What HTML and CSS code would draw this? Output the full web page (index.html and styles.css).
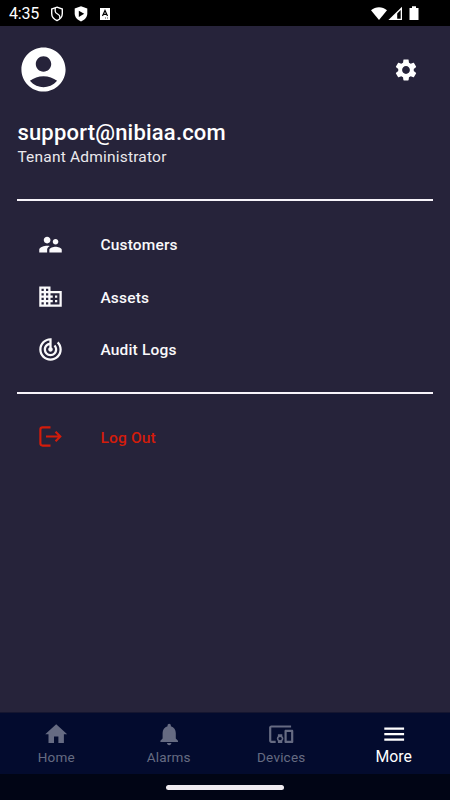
FILE: index.html
```html
<!DOCTYPE html>
<html lang="en">
<head>
<meta charset="utf-8">
<meta name="viewport" content="width=device-width">
<title>More</title>
<link rel="stylesheet" href="styles.css">
</head>
<body>
<div class="screen">
  <header class="status">
    <span class="time">4:35</span>
    <svg class="shield" viewBox="0 0 14 16"><path d="M7 1.2 12.3 3v4.6c0 3.2-2.1 5.7-5.3 7-3.2-1.3-5.3-3.8-5.3-7V3z" fill="none" stroke="#fff" stroke-width="1.4"/><path d="M5.2 2v3.2c0 3 4.6 2.6 4.6 5.4v2" fill="none" stroke="#fff" stroke-width="1.3"/></svg>
    <svg class="shield play" viewBox="0 0 14 16"><path d="M7 .3 13.3 2.5v5.1c0 3.7-2.6 6.5-6.3 7.9C3.3 14.100.7 11.300.7 7.600V2.500z" fill="#fff"/><path d="M4.800 4.700v6.200L10.200 7.800z" fill="#000"/></svg>
    <svg class="abox" viewBox="0 0 10 12"><path d="M0 0h10v12H0z" fill="#fff"/><path d="M2.500 8 5 2.400 7.500 8M3.400 6.300h3.200" fill="none" stroke="#000" stroke-width="1.200"/><path d="M5 10h1M7 10h1" stroke="#000" stroke-width=".7"/></svg>
    <svg class="system" viewBox="0 0 50 16"><path d="M0 4.200C4.700.3 11.300.3 16 4.200L8 14z" fill="#fff"/><path d="M31 .8V14H17.400z" fill="#fff"/><path d="M26.200 7.400 29.700 4v8.800h-3.500z" fill="#000"/><path d="M41 .3h4V2h2.500v12h-9V2H41z" fill="#fff"/></svg>
  </header>
  <main class="content">
    <div class="top">
      <svg class="avatar" viewBox="0 0 24 24"><path d="M12 2C6.480 2 2 6.480 2 12s4.480 10 10 10 10-4.480 10-10S17.520 2 12 2zm0 4c1.930 0 3.500 1.570 3.500 3.500S13.930 13 12 13s-3.500-1.570-3.500-3.500S10.070 6 12 6zm0 14c-2.030 0-4.430-.82-6.140-2.880C7.550 15.800 9.680 15 12 15s4.450.8 6.140 2.120C16.430 19.180 14.030 20 12 20z"/></svg>
      <svg class="gear" viewBox="0 0 24 24"><path d="M19.140 12.940c.04-.3.06-.61.06-.94 0-.32-.02-.64-.07-.94l2.030-1.580c.18-.14.23-.41.12-.61l-1.920-3.320c-.12-.22-.37-.29-.59-.22l-2.390.96c-.5-.38-1.030-.7-1.620-.94l-.36-2.540c-.04-.24-.24-.41-.48-.41h-3.840c-.24 0-.43.17-.47.41l-.36 2.540c-.59.24-1.130.57-1.620.94l-2.390-.96c-.22-.08-.47 0-.59.22L2.740 8.870c-.12.21-.08.47.12.61l2.030 1.580c-.05.3-.09.63-.09.94s.02.64.07.94l-2.030 1.580c-.18.14-.23.41-.12.61l1.920 3.320c.12.22.37.29.59.22l2.390-.96c.5.38 1.030.7 1.620.94l.36 2.540c.05.24.24.41.48.41h3.840c.24 0 .44-.17.47-.41l.36-2.540c.59-.24 1.130-.56 1.620-.94l2.390.96c.22.08.47 0 .59-.22l1.920-3.320c.12-.22.07-.47-.12-.61l-2.010-1.580zM12 15.600c-1.980 0-3.600-1.620-3.600-3.600s1.620-3.600 3.600-3.600 3.600 1.620 3.600 3.600-1.620 3.600-3.600 3.600z"/></svg>
    </div>
    <h1 class="email">support@nibiaa.com</h1>
    <p class="role">Tenant Administrator</p>
    <ul class="menu">
      <li class="row"><svg viewBox="0 0 24 24"><path d="M16.500 12c1.380 0 2.490-1.120 2.490-2.500S17.880 7 16.500 7 14 8.120 14 9.500s1.120 2.500 2.500 2.500zM9 11c1.660 0 2.990-1.340 2.990-3S10.660 5 9 5 6 6.340 6 8s1.340 3 3 3zm7.500 3c-1.830 0-5.500.92-5.500 2.750V19h11v-2.250c0-1.830-3.670-2.750-5.500-2.750zM9 13c-2.330 0-7 1.170-7 3.500V19h7v-2.250c0-.85.33-2.340 2.370-3.470C10.500 13.100 9.660 13 9 13z"/></svg><span>Customers</span></li>
      <li class="row"><svg viewBox="0 0 24 24"><path d="M12 7V3H2v18h20V7H12zM6 19H4v-2h2v2zm0-4H4v-2h2v2zm0-4H4V9h2v2zm0-4H4V5h2v2zm4 12H8v-2h2v2zm0-4H8v-2h2v2zm0-4H8V9h2v2zm0-4H8V5h2v2zm10 12h-8v-2h2v-2h-2v-2h2v-2h-2V9h8v10zm-2-8h-2v2h2v-2zm0 4h-2v2h2v-2z"/></svg><span>Assets</span></li>
      <li class="row"><svg viewBox="0 0 24 24"><path d="M19.070 4.930l-1.410 1.410C19.100 7.790 20 9.790 20 12c0 4.420-3.580 8-8 8s-8-3.580-8-8c0-4.080 3.050-7.440 7-7.930v2.020C8.160 6.570 6 9.030 6 12c0 3.310 2.690 6 6 6s6-2.690 6-6c0-1.660-.67-3.160-1.760-4.240l-1.410 1.410C15.550 9.900 16 10.900 16 12c0 2.210-1.790 4-4 4s-4-1.790-4-4c0-1.860 1.280-3.410 3-3.860v2.140c-.6.35-1 .98-1 1.720 0 1.100.9 2 2 2s2-.9 2-2c0-.74-.4-1.380-1-1.720V2h-1C6.480 2 2 6.480 2 12s4.480 10 10 10 10-4.480 10-10c0-2.760-1.120-5.260-2.930-7.070z"/></svg><span>Audit Logs</span></li>
    </ul>
    <div class="row logout"><svg viewBox="0 0 24 24"><path d="M12 3.900H5Q3 3.900 3 5.900v12.200Q3 20.100 5 20.100h7M8 12h12.500M16.500 7.800l4.200 4.200-4.200 4.200" fill="none" stroke="currentColor" stroke-width="1.900"/></svg><span>Log Out</span></div>
  </main>
  <nav class="tabs">
    <div class="tab"><svg viewBox="0 0 24 24"><path d="M10 20v-6h4v6h5v-8h3L12 3 2 12h3v8z"/></svg><span>Home</span></div>
    <div class="tab"><svg viewBox="0 0 24 24"><path d="M12 22c1.100 0 2-.9 2-2h-4c0 1.100.89 2 2 2zm6-6v-5c0-3.070-1.640-5.640-4.500-6.320V4c0-.83-.67-1.500-1.500-1.500s-1.500.67-1.500 1.500v.68C7.630 5.360 6 7.920 6 11v5l-2 2v1h16v-1l-2-2z"/></svg><span>Alarms</span></div>
    <div class="tab"><svg viewBox="0 0 24 24"><path d="M3 6h18V4H3c-1.100 0-2 .9-2 2v12c0 1.100.9 2 2 2h4v-2H3V6zm10 6H9v1.780c-.61.55-1 1.330-1 2.220s.39 1.670 1 2.220V20h4v-1.780c.61-.55 1-1.340 1-2.220s-.39-1.670-1-2.220V12zm-2 5.500c-.83 0-1.500-.67-1.500-1.500s.67-1.500 1.500-1.500 1.500.67 1.500 1.500-.67 1.500-1.500 1.500zM22 8h-6c-.5 0-1 .5-1 1v10c0 .5.5 1 1 1h6c.5 0 1-.5 1-1V9c0-.5-.5-1-1-1zm-1 10h-4v-8h4v8z"/></svg><span>Devices</span></div>
    <div class="tab active"><svg viewBox="0 0 24 24"><path d="M3 18h18v-2H3v2zm0-5h18v-2H3v2zm0-7v2h18V6H3z"/></svg><span>More</span></div>
  </nav>
  <footer class="gesture"><div class="handle"></div></footer>
</div>
</body>
</html>
```
FILE: styles.css
```css
* { box-sizing: border-box; margin: 0; padding: 0; }
body { background: #26233a; font-family: Roboto, sans-serif; color: #fff; }
svg { display: block; flex: none; fill: currentColor; }
.screen { width: 450px; height: 800px; display: flex; flex-direction: column; overflow: hidden; }
.status { height: 26px; background: #000; display: flex; align-items: center; padding: 1px 29px 0 9px; }
.time { width: 41px; font-size: 16px; line-height: 24px; letter-spacing: -.2px; }
.shield { width: 14px; height: 16px; margin-right: 10px; }
.play { margin-right: 12px; }
.abox { width: 10px; height: 12px; }
.system { width: 50px; height: 16px; margin-left: auto; }
.content { flex: 1; padding: 16.500px 17px 0 17.400px; }
.top { display: flex; justify-content: space-between; align-items: center; height: 54px; padding: 0 14px 0 0; }
.avatar { width: 53px; height: 53px; }
.gear { width: 26px; height: 26px; }
.email { margin-top: 22.500px; font-size: 22px; line-height: 28px; font-weight: 500; letter-spacing: .2px; }
.role { padding-top: 1px; font-size: 15.5px; line-height: 18px; letter-spacing: .2px; color: #ebe9ed; }
.menu { list-style: none; margin-top: 33px; padding: 17px 0 16.5px; border-top: 2px solid #f7f4fa; border-bottom: 2px solid #f7f4fa; }
.row { display: flex; align-items: center; height: 52.5px; padding-left: 19.5px; gap: 36.500px; font-size: 15.5px; font-weight: 500; letter-spacing: .18px; color: #faf9fb; }
.row svg { width: 27px; height: 27px; }
.row span { padding-top: 2px; }
.logout { margin-top: 16.500px; color: #d31c0b; }
.tabs { height: 62px; background: #030b2e; display: flex; border-top: 1px solid #151630; }
.tab { flex: 1; display: flex; flex-direction: column; align-items: center; padding-top: 8px; color: #666b82; font-size: 13.500px; letter-spacing: .2px; }
.tab svg { width: 26.400px; height: 26.400px; }
.tab span { line-height: 20px; }
.tab.active { color: #fff; font-size: 15.800px; letter-spacing: 0; }
.gesture { height: 26px; background: #010515; display: flex; justify-content: center; align-items: center; }
.handle { width: 118px; height: 5px; border-radius: 3px; background: #efebf1; }
```
